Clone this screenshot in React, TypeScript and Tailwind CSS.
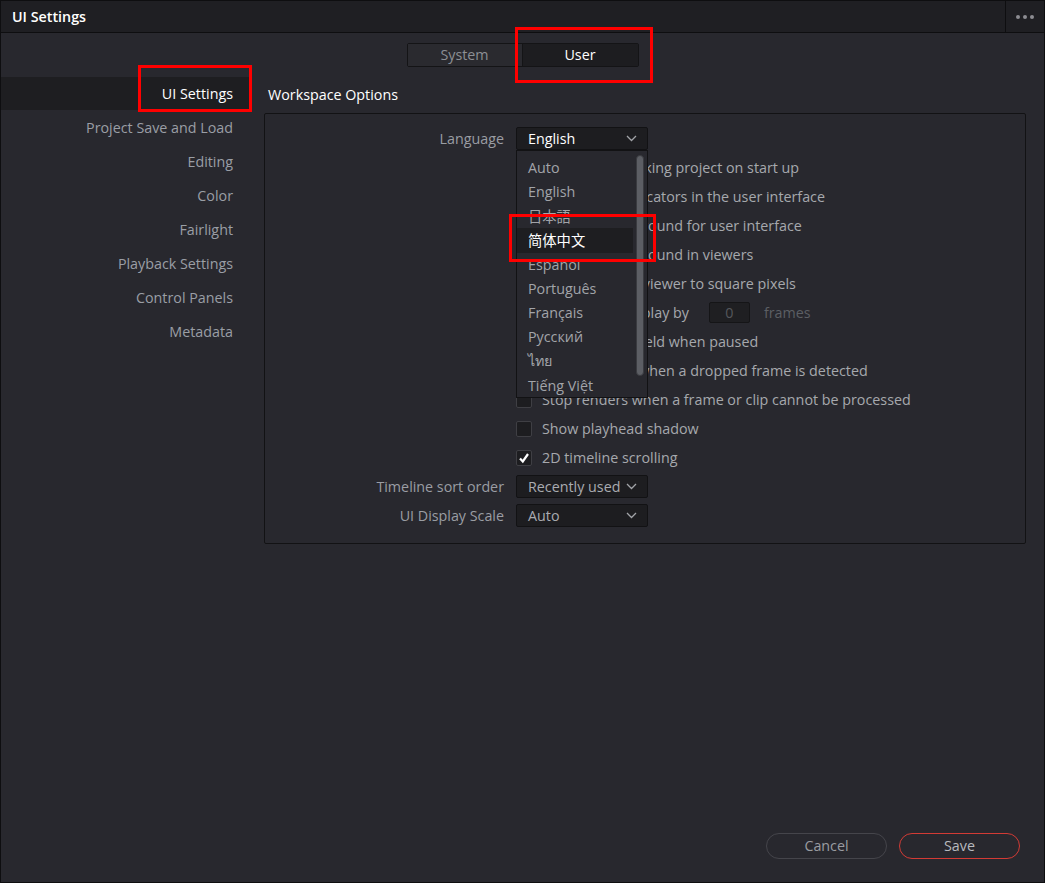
import React from "react";

const font = { fontFamily: '"Open Sans", "Noto Sans", "Noto Sans CJK SC", sans-serif' };

const sidebar = [
  "UI Settings",
  "Project Save and Load",
  "Editing",
  "Color",
  "Fairlight",
  "Playback Settings",
  "Control Panels",
  "Metadata",
];

const languages = ["Auto", "English", "日本語", "简体中文", "Español", "Português", "Français", "Русский", "ไทย", "Tiếng Việt"];

function Chevron() {
  return (
    <svg width="11" height="7" viewBox="0 0 11 7" className="shrink-0">
      <polyline points="1,1 5.5,5.5 10,1" fill="none" stroke="#a2a4a8" strokeWidth="1.3" />
    </svg>
  );
}

function Select({ value, tight }: { value: string; tight?: boolean }) {
  return (
    <div className="w-[132px] h-[23px] bg-[#1d1d20] border border-[#121214] rounded-[2px] flex items-center pl-[11px] pr-[10px] whitespace-nowrap">
      <span className={tight ? "text-[#a9abb0] mr-[6px]" : "text-white flex-1"}>{value}</span>
      <Chevron />
    </div>
  );
}

function Check({ on }: { on?: boolean }) {
  return (
    <div className="w-[16px] h-[16px] bg-[#1d1d20] border border-[#3f3f44] rounded-[2px] flex items-center justify-center shrink-0">
      {on && (
        <svg width="12" height="12" viewBox="0 0 12 12">
          <polyline points="2,6.5 4.8,9.5 10,2" fill="none" stroke="#ffffff" strokeWidth="2.2" />
        </svg>
      )}
    </div>
  );
}

function LanguageList() {
  return (
    <div className="absolute left-0 top-[23px] z-10 w-[132px] h-[248px] bg-[#28282e] border border-[#121214] pt-[5px]">
      {languages.map((l, i) =>
        i === 3 ? (
          <div key={l} className="relative z-10 h-[25px] -mt-[1px] mr-[14px] bg-[#1e1e21] pl-[11px] flex items-center text-white" style={{ fontFamily: '"Noto Sans CJK SC", sans-serif' }}>
            {l}
          </div>
        ) : (
          <div key={l} className="h-[24.2px] pl-[11px] flex items-center text-[#a2a4a9]" style={i === 2 ? { fontFamily: '"Noto Sans CJK JP", sans-serif' } : undefined}>
            {l}
          </div>
        )
      )}
      <div className="absolute right-[3px] top-[4px] w-[8px] h-[221px] rounded-full bg-[#5c5e64] border border-[#3a3b40]" />
    </div>
  );
}

const checks: [string, boolean][] = [
  ["Reload last working project on start up", false],
  ["Show focus indicators in the user interface", false],
  ["Use gray background for user interface", false],
  ["Use gray background in viewers", false],
  ["Scale the main viewer to square pixels", false],
];

const checks2: [string, boolean][] = [
  ["Display single field when paused", false],
  ["Stop playback when a dropped frame is detected", false],
  ["Stop renders when a frame or clip cannot be processed", false],
  ["Show playhead shadow", false],
  ["2D timeline scrolling", true],
];

function Row({ label, children }: { label?: string; children: React.ReactNode }) {
  return (
    <div className="h-[29px] flex items-center whitespace-nowrap">
      <div className="w-[239px] text-right text-[#9a9da3]">{label}</div>
      <div className="ml-[12px] flex items-center relative">{children}</div>
    </div>
  );
}

function CheckRow({ text, on }: { text: string; on: boolean }) {
  return (
    <Row>
      <Check on={on} />
      <span className="ml-[10px] text-[#a6a8ad]">{text}</span>
    </Row>
  );
}

export default function App() {
  return (
    <div className="relative w-[1045px] h-[883px] bg-[#28282e] border border-[#0e0e10] flex flex-col text-[14.3px] leading-[20px]" style={font}>
      <div className="h-[32px] bg-[#1f1f23] border-b border-[#0e0e10] flex items-center">
        <div className="flex-1 pl-[11px] text-white font-semibold">UI Settings</div>
        <div className="w-[39px] h-full border-l border-[#0e0e10] flex items-center justify-center gap-[3px]">
          <span className="w-[4px] h-[4px] rounded-full bg-[#8d8d92]" />
          <span className="w-[4px] h-[4px] rounded-full bg-[#8d8d92]" />
          <span className="w-[4px] h-[4px] rounded-full bg-[#8d8d92]" />
        </div>
      </div>

      <div className="mt-[10px] flex justify-center">
        <div className="flex h-[24px] border border-[#141416] rounded-[2px]">
          <div className="w-[115px] flex items-center justify-center text-[#8c8f94] bg-[#2a2a2f] border-r border-[#141416]">System</div>
          <div className="w-[115px] flex items-center justify-center text-white bg-[#1d1d20]">User</div>
        </div>
      </div>

      <div className="mt-[10px] flex flex-1">
        <div className="w-[249px]">
          {sidebar.map((s, i) => (
            <div key={s} className={`flex items-center justify-end pr-[17px] ${i === 0 ? "bg-[#1e1e21] text-white h-[33px] mb-[1px]" : "h-[34px] text-[#9a9ea5]"}`}>
              {s}
            </div>
          ))}
        </div>

        <div className="ml-[14px] mr-[18px] flex-1 flex flex-col">
          <div className="h-[36px] pt-[8px] pl-[4px] text-white">Workspace Options</div>
          <div className="h-[431px] border border-[#121214] rounded-[2px] pt-[10px]">
            <Row label="Language">
              <Select value="English" />
              <LanguageList />
            </Row>
            {checks.map(([t, on]) => (
              <CheckRow key={t} text={t} on={on} />
            ))}
            <Row>
              <Check />
              <span className="ml-[10px] text-[#a6a8ad]">Delay video display by</span>
              <div className="ml-[20px] w-[41px] h-[21px] bg-[#1f1f22] border border-[#151517] rounded-[2px] flex items-center justify-center text-[#55575c]">0</div>
              <span className="ml-[14px] text-[#5c5f64]">frames</span>
            </Row>
            {checks2.map(([t, on]) => (
              <CheckRow key={t} text={t} on={on} />
            ))}
            <Row label="Timeline sort order">
              <Select value="Recently used" tight />
            </Row>
            <Row label="UI Display Scale">
              <div className="w-[132px] h-[23px] bg-[#1d1d20] border border-[#121214] rounded-[2px] flex items-center pl-[11px] pr-[10px]">
                <span className="text-[#a9abb0] flex-1">Auto</span>
                <Chevron />
              </div>
            </Row>
          </div>
          <div className="mt-auto mb-[23px] mr-[6px] flex justify-end gap-[12px]">
            <button className="w-[121px] h-[26px] rounded-full border border-[#45454b] text-[#9a9ca1] flex items-center justify-center">Cancel</button>
            <button className="w-[121px] h-[26px] rounded-full border border-[#d23b35] text-[#b8babf] flex items-center justify-center">Save</button>
          </div>
        </div>
      </div>

      <div className="absolute left-[137px] top-[64px] w-[114px] h-[47px] border-[3px] border-[#ff0000] z-20" />
      <div className="absolute left-[514px] top-[26px] w-[138px] h-[56px] border-[3px] border-[#ff0000] z-20" />
      <div className="absolute left-[508px] top-[213px] w-[147px] h-[48px] border-[3px] border-[#ff0000] z-20" />
    </div>
  );
}
